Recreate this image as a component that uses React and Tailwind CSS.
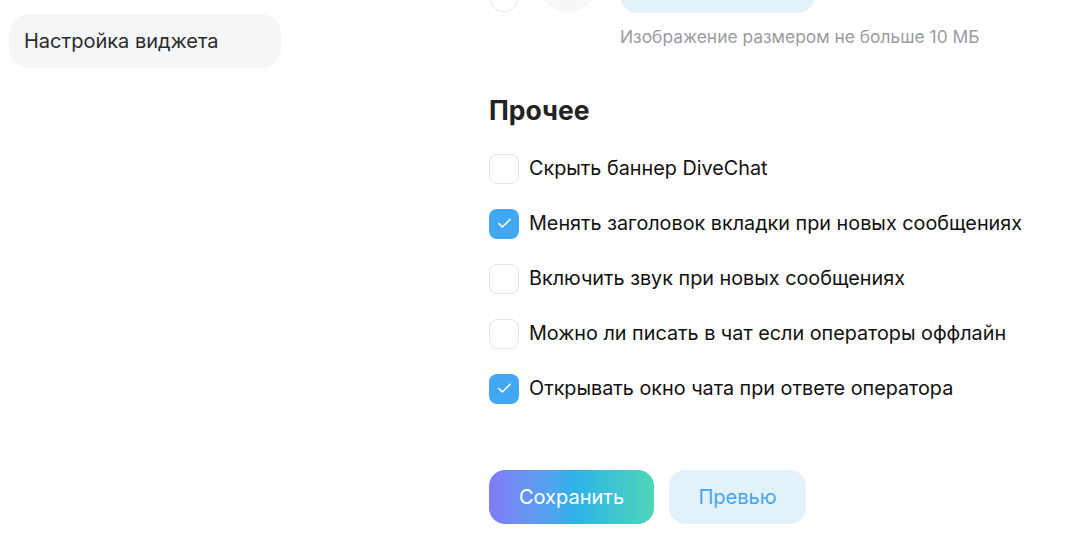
import React, { useState } from 'react';
import { Check } from 'lucide-react';

const font = { fontFamily: 'Inter, "Noto Sans", sans-serif' };

const OPTIONS = [
  { id: 'banner', label: 'Скрыть баннер DiveChat', checked: false },
  { id: 'title', label: 'Менять заголовок вкладки при новых сообщениях', checked: true },
  { id: 'sound', label: 'Включить звук при новых сообщениях', checked: false },
  { id: 'offline', label: 'Можно ли писать в чат если операторы оффлайн', checked: false },
  { id: 'open', label: 'Открывать окно чата при ответе оператора', checked: true },
];

function Checkbox({ checked, onChange, label }) {
  return (
    <label className="flex items-center gap-[10px] cursor-pointer h-[30px]">
      <button
        type="button"
        onClick={onChange}
        className={`w-[30px] h-[30px] rounded-[8px] flex items-center justify-center shrink-0 ${
          checked ? 'bg-[#42a7f5]' : 'bg-white border border-[#e3e5ea]'
        }`}
      >
        {checked && <Check size={17} strokeWidth={2.2} className="text-white" />}
      </button>
      <span className="text-[19.8px] text-[#111]">{label}</span>
    </label>
  );
}

export default function App() {
  const [options, setOptions] = useState(OPTIONS);

  const toggle = (id) => {
    setOptions(prev => prev.map(o => (o.id === id ? { ...o, checked: !o.checked } : o)));
  };

  return (
    <div className="w-[1076px] h-[536px] overflow-hidden bg-white flex" style={font}>
      {/* sidebar */}
      <aside className="w-[489px] shrink-0 pl-[9px] pt-[14px]">
        <div className="w-[272px] h-[54px] rounded-[20px] bg-[#f5f6f8] flex items-center px-[15px] text-[20px] text-[#2b2b2b]">
          Настройка виджета
        </div>
      </aside>

      {/* settings */}
      <main className="flex-1">
        {/* avatar upload */}
        <div className="flex items-start mt-[-48px]">
          <div className="w-[30px] h-[30px] mt-[30px] rounded-full border border-[#e3e5ea] bg-white" />
          <div className="w-[60px] h-[60px] ml-[19px] rounded-full bg-[#f7f8fa]" />
          <div className="w-[195px] h-[54px] ml-[22px] mt-[7px] rounded-[18px] bg-[#e3f1fb]" />
        </div>
        <p className="ml-[131px] mt-[11px] text-[17.4px] text-[#9a9ca3]">Изображение размером не больше 10 МБ</p>

        <h2 className="mt-[47px] text-[26.5px] font-bold text-[#222] leading-none">Прочее</h2>

        <div className="mt-[30px] flex flex-col gap-[25px]">
          {options.map(o => (
            <Checkbox key={o.id} checked={o.checked} label={o.label} onChange={() => toggle(o.id)} />
          ))}
        </div>

        <div className="mt-[66px] flex gap-[15px]">
          <button
            type="button"
            className="w-[165px] h-[54px] rounded-[16px] text-[20px] text-white bg-gradient-to-r from-[#7f7bf7] via-[#2fb0ea] to-[#4fd6b6]"
          >
            Сохранить
          </button>
          <button type="button" className="w-[137px] h-[54px] rounded-[16px] text-[20px] text-[#45a6ef] bg-[#e3f1fb]">
            Превью
          </button>
        </div>
      </main>
    </div>
  );
}
